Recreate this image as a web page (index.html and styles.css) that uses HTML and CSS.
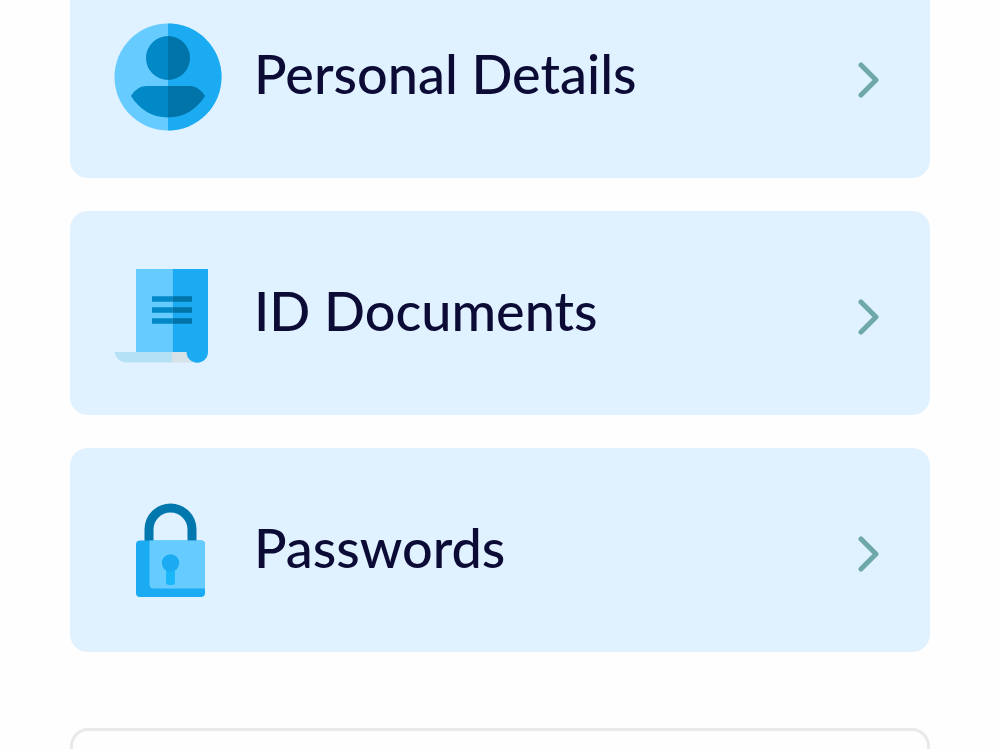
FILE: index.html
```html
<!DOCTYPE html>
<html lang="en">
<head>
<meta charset="utf-8">
<meta name="viewport" content="width=device-width, initial-scale=1">
<title>Personal Details</title>
<link rel="stylesheet" href="styles.css">
</head>
<body>
<main class="page">
  <nav class="menu" aria-label="Sections">
    <a class="card" href="#personal">
      <svg class="icon" viewBox="0 0 108 108" aria-hidden="true">
        <circle cx="54" cy="55" r="53.5" fill="#66ccff"/>
        <path d="M54 1.5a53.5 53.5 0 0 1 0 107z" fill="#1aabf2"/>
        <path d="M54 14a22 22 0 0 0 0 44zM54 64H33C25 64 20 69 17 74C25 87 38 95.500 54 95.500z" fill="#0088c7"/>
        <path d="M54 14a22 22 0 0 1 0 44zM54 64H75C83 64 88 69 91 74C83 87 70 95.500 54 95.500z" fill="#0073a8"/>
      </svg>
      <span class="label">Personal Details</span>
      <svg class="chevron" viewBox="0 0 24 44" aria-hidden="true"><path d="M4 11L19 26L4 41"/></svg>
    </a>
    <a class="card" href="#documents">
      <svg class="icon" viewBox="0 0 108 108" aria-hidden="true">
        <path d="M0.500 93H58V103.500H13C6 103.500 2 99 0.500 93z" fill="#b5e1f5"/>
        <path d="M58 93H76L80 103.500H58z" fill="#d6e1e8"/>
        <path d="M22 10H58.500V93H22z" fill="#66ccff"/>
        <path d="M58.500 10H94V93a10.750 10.750 0 0 1-21.500 0H58.500z" fill="#1aabf2"/>
        <path d="M38 37.250H58.500V42.750H38zM38 48.250H58.500V53.750H38zM38 59.250H58.500V64.750H38z" fill="#0088c7"/>
        <path d="M58.500 37.250H78V42.750H58.500zM58.500 48.250H78V53.750H58.500zM58.500 59.250H78V64.750H58.500z" fill="#0073a8"/>
      </svg>
      <span class="label">ID Documents</span>
      <svg class="chevron" viewBox="0 0 24 44" aria-hidden="true"><path d="M4 11L19 26L4 41"/></svg>
    </a>
    <a class="card" href="#passwords">
      <svg class="icon" viewBox="0 0 108 108" aria-hidden="true">
        <path d="M35 46V33.500a21.500 21.500 0 0 1 43 0V46" fill="none" stroke="#0077ad" stroke-width="9"/>
        <rect x="22" y="44.500" width="69" height="56.500" rx="4" fill="#1aabf2"/>
        <path d="M35.500 44.500H87a4 4 0 0 1 4 4V92.500H39.500a4 4 0 0 1-4-4z" fill="#66ccff"/>
        <path d="M52 73.500H61V86a3 3 0 0 1-3 3H55a3 3 0 0 1-3-3z" fill="#1ab7f8"/>
        <circle cx="56.500" cy="67" r="8.700" fill="#1aabf2"/>
      </svg>
      <span class="label">Passwords</span>
      <svg class="chevron" viewBox="0 0 24 44" aria-hidden="true"><path d="M4 11L19 26L4 41"/></svg>
    </a>
  </nav>
  <section class="panel" aria-label="More"></section>
</main>
</body>
</html>
```
FILE: styles.css
```css
* {
  box-sizing: border-box;
}

body {
  margin: 0;
  background: #fefefe;
  font-family: Lato, "Liberation Sans", sans-serif;
}

.page {
  display: flex;
  flex-direction: column;
  gap: 76px;
  height: 100vh;
  padding: 0 7%;
  overflow: hidden;
}

/* The list is scrolled slightly past the top of the window. */
.menu {
  display: flex;
  flex: none;
  flex-direction: column;
  gap: 33px;
  margin-top: -26px;
}

.card {
  display: flex;
  align-items: center;
  gap: 32px;
  padding: 48px 49px 48px 44px;
  border-radius: 18px;
  background: #e0f1ff;
  color: #0b0b36;
  text-decoration: none;
}

.icon {
  flex: none;
  width: 108px;
  height: 108px;
  overflow: visible;
}

.label {
  flex: 1;
  padding-bottom: 4px;
  font-size: 54px;
  font-weight: 500;
  line-height: 64px;
}

.chevron {
  flex: none;
  width: 24px;
  height: 44px;
  fill: none;
  stroke: #6fa8ab;
  stroke-width: 5;
  stroke-linecap: round;
  stroke-linejoin: round;
}

.panel {
  flex: none;
  height: 204px;
  border: 3px solid #e9e9e9;
  border-radius: 18px;
}
```
